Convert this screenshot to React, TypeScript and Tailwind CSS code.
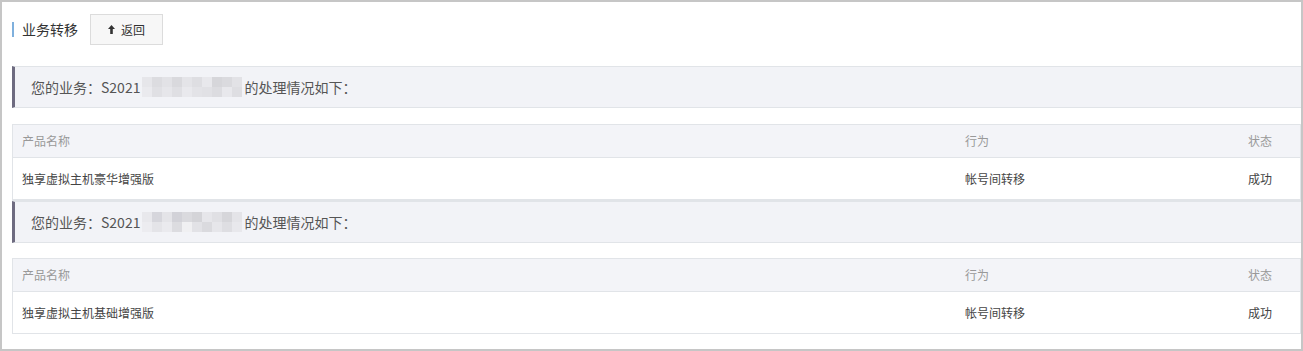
import React from "react";

const cells1 = [
  "#e6e6ea", "#dcdce0", "#e2e2e6", "#d9d9dd", "#e4e4e8", "#dedee2", "#e8e8ec", "#d6d6da", "#dadade", "#e2e2e6",
  "#eaeaee", "#e0e0e4", "#e6e6ea", "#dfdfe3", "#e9e9ed", "#e3e3e7", "#e1e1e5", "#dcdce0", "#e8e8ec", "#dedee2",
];
const cells2 = [
  "#e8e8ec", "#d6d6dc", "#e4e4e8", "#d2d2d8", "#dadade", "#d4d4d8", "#e6e6ea", "#e0e0e4", "#d6d6da", "#e4e4e8",
  "#ececf0", "#e4e4e8", "#eaeaee", "#dcdce0", "#f0f0f2", "#e2e2e6", "#dadade", "#e6e6ea", "#dedee2", "#e8e8ec",
];

function Blur({ cells }: { cells: string[] }) {
  return (
    <span className="inline-grid grid-cols-10 w-[100px] h-[20px] align-middle mx-[2px]">
      {cells.map((c, i) => (
        <span key={i} style={{ backgroundColor: c }} />
      ))}
    </span>
  );
}

function Notice({ cells }: { cells: string[] }) {
  return (
    <div className="h-[42px] flex items-center bg-[#f2f3f7] border-y border-[#e1e4e8] border-l-[3px] border-l-[#6e6b80] pl-[16px] text-[14px] text-[#555]">
      <span>您的业务：S2021</span>
      <Blur cells={cells} />
      <span>的处理情况如下：</span>
    </div>
  );
}

function Table({ name }: { name: string }) {
  return (
    <div className="border border-[#e1e4e8] text-[12px]">
      <div className="grid grid-cols-[942px_283px_1fr] h-[33px] items-center bg-[#f3f4f8] border-b border-[#e1e4e8] text-[#999]">
        <div className="pl-[9px]">产品名称</div>
        <div className="pl-[10px]">行为</div>
        <div className="pl-[10px]">状态</div>
      </div>
      <div className="grid grid-cols-[942px_283px_1fr] h-[41px] items-center bg-white text-[#444]">
        <div className="pl-[9px]">{name}</div>
        <div className="pl-[10px]">帐号间转移</div>
        <div className="pl-[10px]">成功</div>
      </div>
    </div>
  );
}

export default function App() {
  return (
    <div
      className="w-[1303px] h-[351px] border-2 border-[#c6c6c6] bg-white pl-[10px] overflow-hidden"
      style={{ fontFamily: '"Noto Sans CJK SC", "Noto Sans", sans-serif' }}
    >
      <div className="flex items-center pt-[11px] h-[64px] pb-[20px]">
        <div className="w-[2px] h-[15px] bg-[#7fb0dd]" />
        <span className="ml-[8px] text-[14px] text-[#333]">业务转移</span>
        <button className="ml-[12px] w-[73px] h-[31px] border border-[#dcdcdc] bg-[#f7f7f7] flex items-center justify-center gap-[6px] text-[12px] text-[#333]">
          <svg width="7" height="9" viewBox="0 0 7 9">
            <path d="M3.5 0 L7 4 L4.8 4 L4.8 9 L2.2 9 L2.2 4 L0 4 Z" fill="#333" />
          </svg>
          <span>返回</span>
        </button>
      </div>
      <Notice cells={cells1} />
      <div className="h-[16px]" />
      <div className="border-b border-[#e1e4e8]">
        <Table name="独享虚拟主机豪华增强版" />
      </div>
      <Notice cells={cells2} />
      <div className="h-[15px]" />
      <Table name="独享虚拟主机基础增强版" />
    </div>
  );
}
